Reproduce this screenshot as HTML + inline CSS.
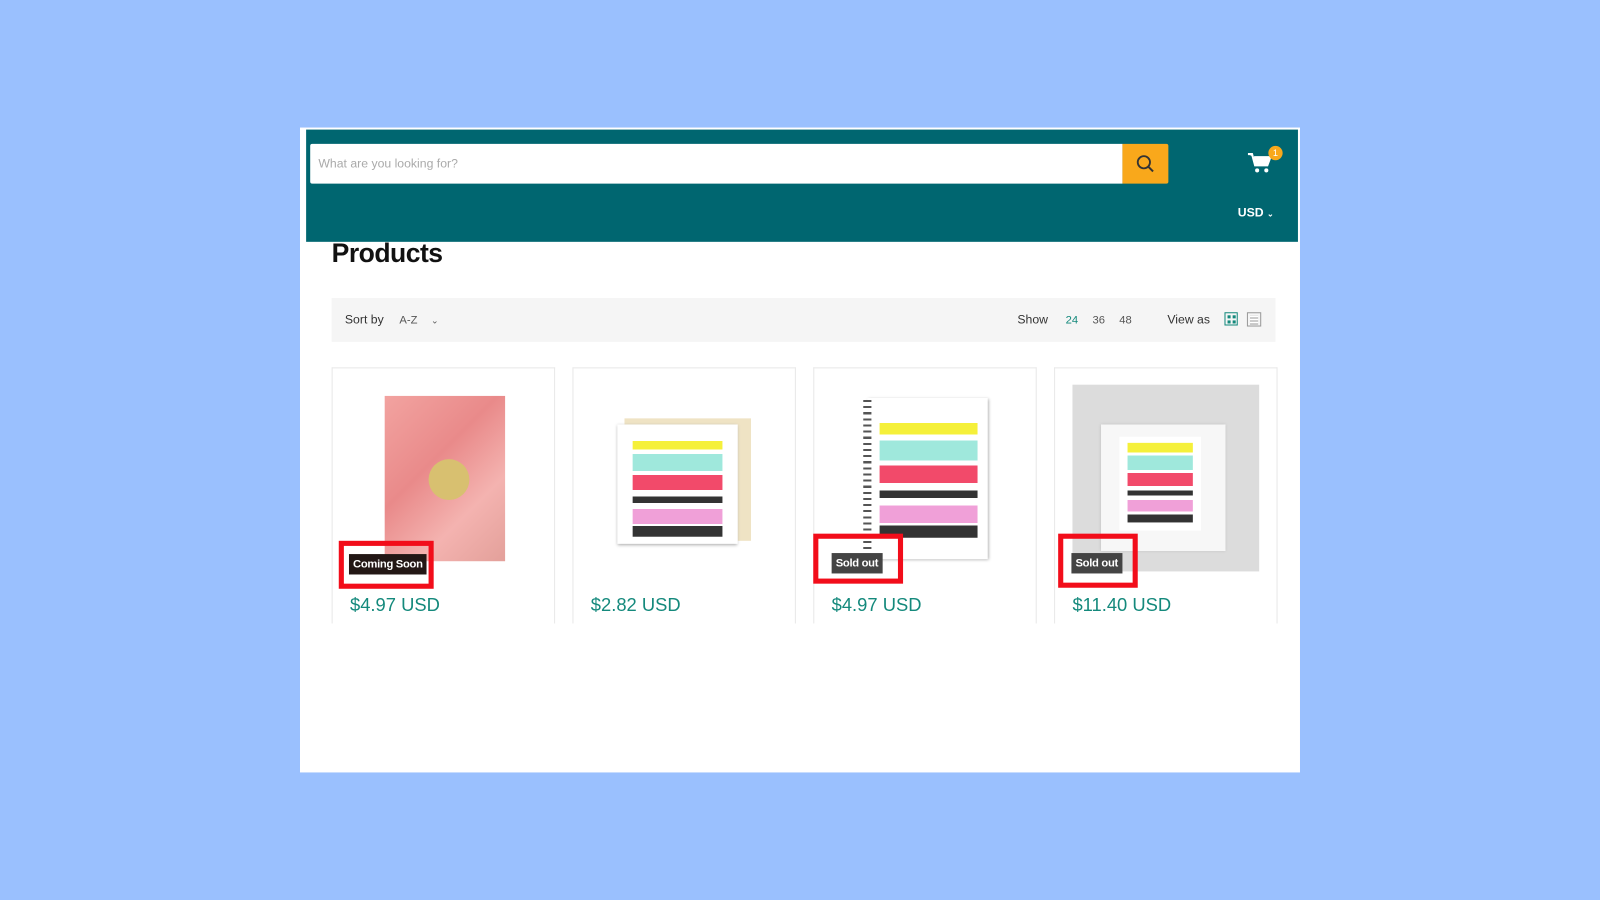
<!DOCTYPE html>
<html><head><meta charset="utf-8"><style>
html,body{margin:0;padding:0;width:1600px;height:900px;overflow:hidden;background:#9ac0fe;font-family:"Liberation Sans",sans-serif}
#w{position:absolute;left:0;top:0;width:1568px;height:882px;transform:scale(1.0204);transform-origin:0 0}
.a{position:absolute}
.card{position:absolute;top:360px;width:217px;height:250px;border:1px solid #e8e8e8;border-bottom:none;background:#fff}
.price{position:absolute;left:17px;top:222px;color:#14897c;font-size:18px}
.red{position:absolute;border:5px solid #f20d1a}
.badge{position:absolute;color:#fff;font-size:11px;font-weight:bold;padding:4px 4px;letter-spacing:-0.3px}
</style></head><body><div id="w">
<div class="a" style="left:294px;top:125px;width:980px;height:632px;background:#fff"></div>
<div class="a" style="left:300px;top:127px;width:972px;height:110px;background:#006670"></div>
<div class="a" style="left:304px;top:141px;width:796px;height:39px;background:#fff;border-radius:2px 0 0 2px"></div>
<div class="a" style="left:312px;top:153px;font-size:12px;color:#aaa">What are you looking for?</div>
<div class="a" style="left:1100px;top:141px;width:45px;height:39px;background:#f9a81b;border-radius:0 2px 2px 0"></div>
<svg class="a" style="left:1113px;top:151px" width="20" height="20" viewBox="0 0 20 20"><circle cx="8" cy="8" r="6" fill="none" stroke="#333" stroke-width="1.8"/><path d="M12.5 12.5L17 17" stroke="#333" stroke-width="2"/></svg>
<svg class="a" style="left:1222px;top:148px" width="26" height="24" viewBox="0 0 26 24"><path d="M1 3h4l3 11h12l3-8H7" fill="#fff" stroke="#fff" stroke-width="2"/><circle cx="10" cy="19" r="2" fill="#fff"/><circle cx="19" cy="19" r="2" fill="#fff"/></svg>
<div class="a" style="left:1243px;top:143px;width:14px;height:14px;border-radius:7px;background:#f9a81b;color:#fff;font-size:9px;text-align:center;line-height:14px">1</div>
<div class="a" style="left:1213px;top:201px;font-size:12px;color:#fff;font-weight:bold">USD <span style="font-size:8px">&#8964;</span></div>
<div class="a" style="left:325px;top:233px;font-size:26px;color:#111;font-weight:bold;letter-spacing:-0.5px">Products</div>
<div class="a" style="left:325px;top:292px;width:925px;height:43px;background:#f5f5f5"></div>
<div class="a" style="left:338px;top:306px;font-size:12px;color:#333">Sort by <span style="color:#555;margin-left:12px;font-size:11px">A-Z</span> <span style="color:#555;margin-left:10px;font-size:9px">&#8964;</span></div>
<div class="a" style="left:997px;top:306px;font-size:12px;color:#333">Show <span style="color:#14897c;margin-left:14px;font-size:11px">24</span><span style="color:#555;margin-left:14px;font-size:11px">36</span><span style="color:#555;margin-left:14px;font-size:11px">48</span></div>
<div class="a" style="left:1144px;top:306px;font-size:12px;color:#333">View as</div>
<div class="a" style="left:1200px;top:306px;width:13px;height:13px;border:1px solid #14897c;box-sizing:border-box;background:linear-gradient(#14897c,#14897c) 2px 2px/3px 3px no-repeat,linear-gradient(#14897c,#14897c) 7px 2px/3px 3px no-repeat,linear-gradient(#14897c,#14897c) 2px 7px/3px 3px no-repeat,linear-gradient(#14897c,#14897c) 7px 7px/3px 3px no-repeat"></div>
<div class="a" style="left:1222px;top:306px;width:14px;height:14px;border:1px solid #999;box-sizing:border-box;background:repeating-linear-gradient(#fff 0 2px,#999 2px 3px) 2px 2px/8px 9px no-repeat"></div>

<div class="card" style="left:325px"><div class="price">$4.97 USD</div></div>
<div class="card" style="left:561px"><div class="price">$2.82 USD</div></div>
<div class="card" style="left:797px"><div class="price">$4.97 USD</div></div>
<div class="card" style="left:1033px"><div class="price">$11.40 USD</div></div>

<!-- images -->
<div class="a" style="left:377px;top:388px;width:118px;height:162px;background:linear-gradient(135deg,#f2a3a0,#e98a8a 40%,#f4b3b0 70%,#e3a09a)"></div>
<div class="a" style="left:420px;top:450px;width:40px;height:40px;border-radius:20px;background:#d8c070"></div>
<div class="a" style="left:612px;top:410px;width:124px;height:120px;background:#efe3c4"></div>
<div class="a" style="left:605px;top:416px;width:118px;height:117px;background:#fff;box-shadow:0 1px 3px #aaa"></div>
<div class="a" style="left:620px;top:422px;width:88px;height:104px;background:linear-gradient(#fff 0,#fff 10%,#f5f03a 10%,#f5f03a 18%,#fff 18%,#fff 22%,#9fe8dc 22%,#9fe8dc 38%,#fff 38%,#fff 42%,#f24a6a 42%,#f24a6a 56%,#fff 56%,#fff 62%,#333 62%,#333 68%,#fff 68%,#fff 74%,#f0a0d8 74%,#f0a0d8 88%,#fff 88%,#fff 90%,#333 90%,#333 100%)"></div>
<div class="a" style="left:850px;top:390px;width:118px;height:158px;background:#fff;box-shadow:1px 1px 3px #aaa"></div>
<div class="a" style="left:862px;top:405px;width:96px;height:122px;background:linear-gradient(#fff 0,#fff 8%,#f5f03a 8%,#f5f03a 17%,#fff 17%,#fff 22%,#9fe8dc 22%,#9fe8dc 38%,#fff 38%,#fff 42%,#f24a6a 42%,#f24a6a 56%,#fff 56%,#fff 62%,#333 62%,#333 68%,#fff 68%,#fff 74%,#f0a0d8 74%,#f0a0d8 88%,#fff 88%,#fff 90%,#333 90%,#333 100%)"></div>
<div class="a" style="left:846px;top:392px;width:8px;height:150px;background:repeating-linear-gradient(#555 0 2px,#fff 2px 6px)"></div>
<div class="a" style="left:1051px;top:377px;width:183px;height:183px;background:#dcdcdc"></div>
<div class="a" style="left:1079px;top:416px;width:122px;height:124px;background:#f7f7f7;box-shadow:0 0 3px #bbb"></div>
<div class="a" style="left:1097px;top:428px;width:80px;height:92px;background:#fff"></div>
<div class="a" style="left:1105px;top:434px;width:64px;height:78px;background:linear-gradient(#f5f03a 0,#f5f03a 12%,#fff 12%,#fff 16%,#9fe8dc 16%,#9fe8dc 34%,#fff 34%,#fff 38%,#f24a6a 38%,#f24a6a 54%,#fff 54%,#fff 60%,#333 60%,#333 66%,#fff 66%,#fff 72%,#f0a0d8 72%,#f0a0d8 86%,#fff 86%,#fff 90%,#333 90%,#333 100%)"></div>

<div class="red" style="left:332px;top:530px;width:83px;height:37px"></div>
<div class="badge" style="left:342px;top:543px;background:#231715">Coming Soon</div>
<div class="red" style="left:797px;top:523px;width:78px;height:39px"></div>
<div class="badge" style="left:815px;top:542px;background:#444">Sold out</div>
<div class="red" style="left:1037px;top:523px;width:68px;height:43px"></div>
<div class="badge" style="left:1050px;top:542px;background:#444">Sold out</div>
</div></body></html>
